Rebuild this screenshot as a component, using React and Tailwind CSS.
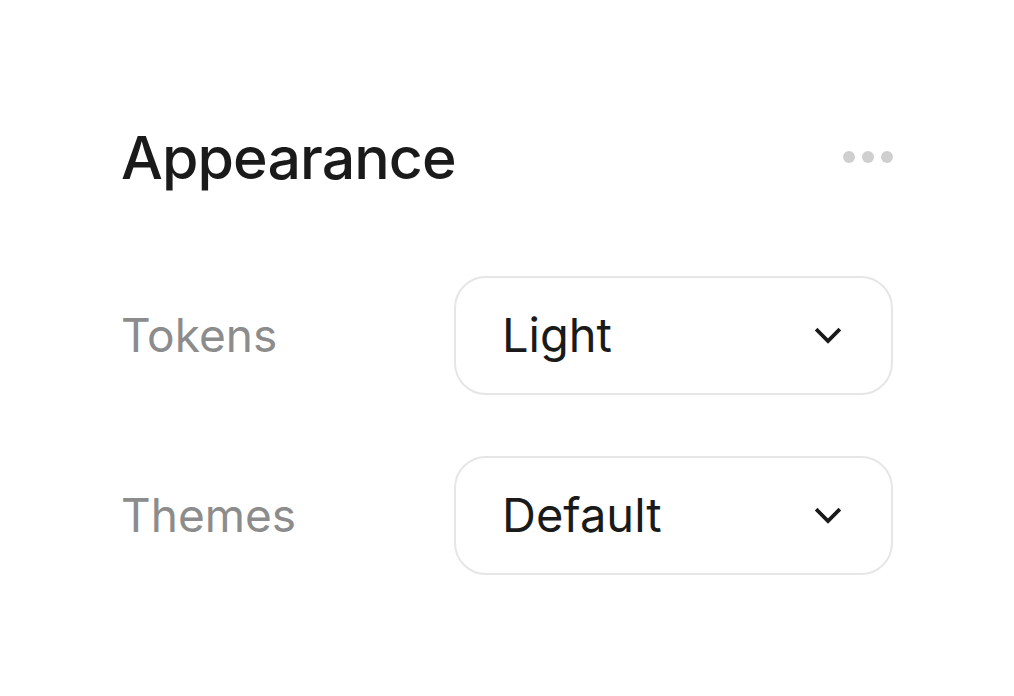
export default function App() {
  const Chevron = () => (
    <svg width="28" height="18" viewBox="0 0 28 18" fill="none" stroke="#1a1a1a" strokeWidth="3.8" strokeLinecap="square" strokeLinejoin="miter">
      <path d="M3.5 3.5 L14 14 L24.5 3.5" />
    </svg>
  );
  const Select = ({ value }) => (
    <div className="flex h-[119px] w-[439px] items-center justify-between rounded-[32px] border-[2.5px] border-[#e6e6e6] bg-white pl-[46px] pr-[49px]">
      <span className="text-[47px] text-[#1a1a1a]">{value}</span>
      <Chevron />
    </div>
  );
  return (
    <div className="h-[696px] w-[1014px] bg-white pl-[121px] pt-[124px]" style={{ fontFamily: "Inter, 'Noto Sans', sans-serif" }}>
      <div className="flex w-[772px] flex-col">
        <div className="flex h-[66px] items-center justify-between">
          <h1 className="text-[59px] leading-none font-medium tracking-[-0.9px] text-[#1a1a1a]">Appearance</h1>
          <div className="flex gap-[7px]">
            <span className="h-[12px] w-[12px] rounded-full bg-[#cfcfcf]" />
            <span className="h-[12px] w-[12px] rounded-full bg-[#cfcfcf]" />
            <span className="h-[12px] w-[12px] rounded-full bg-[#cfcfcf]" />
          </div>
        </div>
        <div className="mt-[86px] flex flex-col gap-[61px]">
          <div className="flex items-center justify-between">
            <span className="text-[46px] text-[#8c8c8c]">Tokens</span>
            <Select value="Light" />
          </div>
          <div className="flex items-center justify-between">
            <span className="text-[46px] text-[#8c8c8c]">Themes</span>
            <Select value="Default" />
          </div>
        </div>
      </div>
    </div>
  );
}
